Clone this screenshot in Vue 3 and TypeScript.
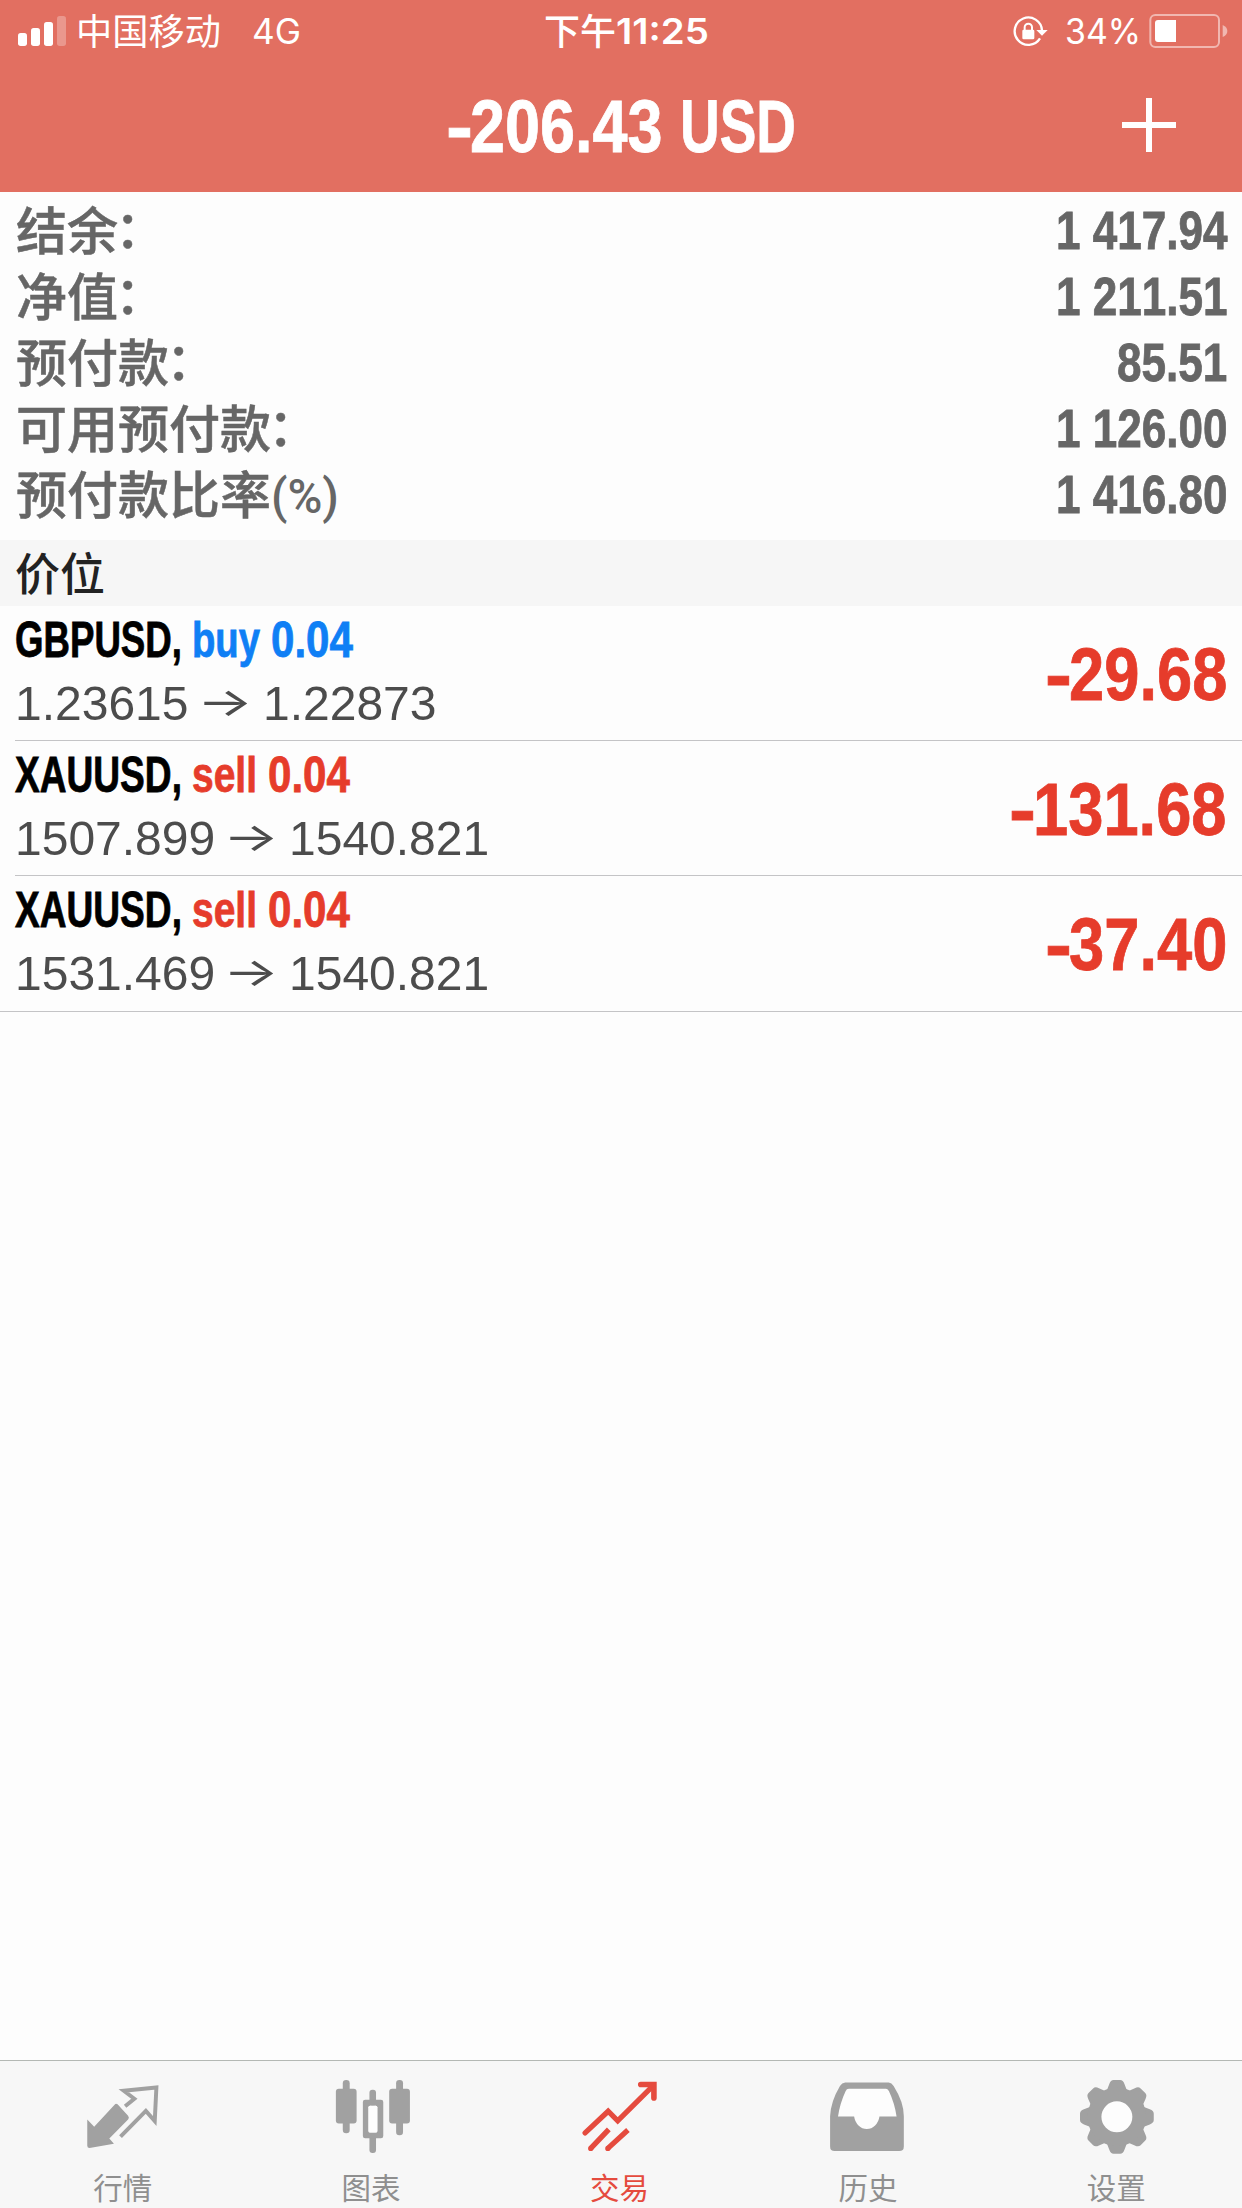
<script setup lang="ts">
import { h, type VNode } from 'vue'

interface RunProps {
  text: string
  /** width the text is set to */
  w: number
  /** line height */
  h: number
  /** baseline, from the top of the line */
  base: number
  /** room taken in the line, when it differs from the width */
  box?: number
}

// A run of text condensed or expanded to a set width.
const Run = (p: RunProps) =>
  h('svg', { width: p.box ?? p.w, height: p.h, style: 'display:block;flex:none;overflow:visible;fill:currentColor' }, [
    h(
      'text',
      {
        x: 0,
        y: p.base,
        onVnodeMounted: (node: VNode) => {
          const el = node.el as SVGTextElement
          el.setAttribute('transform', `scale(${p.w / el.getComputedTextLength()} 1)`)
        },
      },
      p.text,
    ),
  ])
Run.props = ['text', 'w', 'h', 'base', 'box']

// Figures share one width; spaces and points take half of it.
const figures = (s: string, pitch: number): number =>
  [...s].reduce((sum, c) => sum + (c === ' ' || c === '.' ? pitch / 2 : pitch), 0)

const summary = [
  { label: '结余', mark: '：', value: '1 417.94' },
  { label: '净值', mark: '：', value: '1 211.51' },
  { label: '预付款', mark: '：', value: '85.51' },
  { label: '可用预付款', mark: '：', value: '1 126.00' },
  { label: '预付款比率', unit: '(%)', value: '1 416.80' },
]

const positions = [
  { symbol: 'GBPUSD,', side: 'buy', sideWidth: 68, lots: '0.04', open: '1.23615', now: '1.22873', profit: '29.68' },
  { symbol: 'XAUUSD,', side: 'sell', sideWidth: 65, lots: '0.04', open: '1507.899', now: '1540.821', profit: '131.68' },
  { symbol: 'XAUUSD,', side: 'sell', sideWidth: 65, lots: '0.04', open: '1531.469', now: '1540.821', profit: '37.40' },
]
</script>

<template>
  <div class="app">
    <header class="header">
      <div class="status">
        <div class="status-left">
          <svg width="48" height="32" viewBox="54 42 144 96" fill="#fff">
            <rect x="54" y="96" width="27" height="39" rx="8" />
            <rect x="93" y="81" width="27" height="54" rx="8" />
            <rect x="132" y="63" width="27" height="72" rx="8" />
            <rect x="171" y="45" width="27" height="90" rx="8" opacity=".28" />
          </svg>
          <Run class="carrier" text="中国移动" :w="145" :h="62" :base="45" />
          <Run class="network" text="4G" :w="49" :h="62" :base="44" />
        </div>
        <div class="clock">
          <Run class="clock-cjk" text="下午" :w="72" :h="62" :base="45" />
          <Run class="clock-num" text="11:25" :w="93" :h="62" :base="44" />
        </div>
        <div class="status-right">
          <svg class="lock" width="36" height="32" viewBox="575 42 108 96" fill="none" stroke="#fff">
            <path d="M659 112A41 41 0 1 1 665 88" stroke-width="7" />
            <path d="M648 87H682L665 104Z" fill="#fff" stroke="none" />
            <rect x="606" y="86" width="36" height="29" rx="4" fill="#fff" stroke="none" />
            <path d="M613 89V79a11 11 0 0 1 22 0V89" stroke-width="6" />
          </svg>
          <Run class="percent" text="34%" :w="76" :h="62" :base="44" />
          <svg width="79" height="34" viewBox="987 39 237 102">
            <rect x="991" y="42" width="206" height="96" rx="15" fill="none" stroke="#fff" stroke-opacity=".5" stroke-width="6" />
            <path d="M1068 57V123H1014Q1005 123 1005 114V66Q1005 57 1014 57Z" fill="#fff" />
            <path d="M1208 72Q1222 78 1222 90T1208 108Z" fill="#fff" fill-opacity=".5" />
          </svg>
        </div>
      </div>
      <div class="titlebar">
        <div class="title">
          <Run text="-" :w="27" :box="24" :h="130" :base="90" />
          <Run text="206.43" :w="192.5" :h="130" :base="90" />
          <Run class="currency" text="USD" :w="116" :h="130" :base="90" />
        </div>
        <svg class="plus" width="54" height="54" viewBox="0 0 54 54" stroke="#fff" stroke-width="6">
          <path d="M27 0V54M0 27H54" />
        </svg>
      </div>
    </header>

    <section class="summary">
      <div v-for="row in summary" :key="row.label" class="summary-row">
        <span class="label">{{ row.label }}<span v-if="row.mark" class="mark">{{ row.mark }}</span></span>
        <Run v-if="row.unit" class="unit" :text="row.unit" :w="68" :h="66" :base="51" />
        <Run class="value" :text="row.value" :w="figures(row.value, 24.5)" :h="66" :base="51" />
      </div>
    </section>

    <h2 class="section-title">价位</h2>

    <section class="positions">
      <article v-for="(p, i) in positions" :key="i" class="position">
        <div class="details">
          <div class="deal">
            <Run class="symbol" :text="p.symbol" :w="167" :h="66" :base="51" />
            <Run class="side" :class="p.side" :text="p.side" :w="p.sideWidth" :h="66" :base="51" />
            <Run class="lots" :class="p.side" :text="p.lots" :w="82" :h="66" :base="51" />
          </div>
          <div class="prices">
            <Run :text="p.open" :w="figures(p.open, 26.7)" :h="68" :base="48" />
            <Run class="arrow" text="→" :w="56" :h="68" :base="44" />
            <Run :text="p.now" :w="figures(p.now, 26.7)" :h="68" :base="48" />
          </div>
        </div>
        <div class="profit">
          <Run text="-" :w="27" :box="24" :h="134" :base="94" />
          <Run :text="p.profit" :w="figures(p.profit, 35.2)" :h="134" :base="94" />
        </div>
      </article>
    </section>

    <nav class="tabs">
      <a class="tab">
        <svg width="80" height="80" viewBox="132.6 108 240 240">
          <path d="M141 240L162 262L224 195Q228 190 233 194L265 229Q270 235 265 240L208 298L222 314L148 327Q141 327 141 320Z" fill="currentColor" />
          <path d="M256 200L284 177L252 153L351 143L346 245L319 214L242 292" fill="none" stroke="currentColor" stroke-width="12" />
        </svg>
        <span>行情</span>
      </a>
      <a class="tab">
        <svg width="80" height="80" viewBox="877.8 108 240 240" fill="currentColor">
          <rect x="906" y="120" width="21" height="162" rx="10" />
          <rect x="885" y="147" width="63" height="105" rx="9" />
          <rect x="1068" y="120" width="21" height="168" rx="10" />
          <rect x="1047" y="147" width="63" height="105" rx="9" />
          <rect x="987" y="150" width="20" height="48" rx="9" />
          <rect x="987" y="284" width="20" height="58" rx="9" />
          <path fill-rule="evenodd" d="M974 180H1022Q1029 180 1029 187V290Q1029 297 1022 297H974Q967 297 967 290V187Q967 180 974 180ZM989 198Q984 198 984 203V275Q984 280 989 280H1006Q1011 280 1011 275V203Q1011 198 1006 198Z" />
          <rect x="984" y="198" width="27" height="82" rx="5" fill="#fdfdfd" />
        </svg>
        <span>图表</span>
      </a>
      <a class="tab active">
        <svg width="80" height="80" viewBox="123 108 240 240" fill="none" stroke="currentColor" stroke-width="16">
          <path d="M134 281L204 215L233 244L340 138" stroke-linecap="round" />
          <path d="M303 134H343V175" stroke-width="17" stroke-linecap="round" />
          <path d="M151 328L206 270M203 328L264 272" />
          <path d="M151 328h.1M203 328h.1" stroke-linecap="round" />
        </svg>
        <span>交易</span>
      </a>
      <a class="tab">
        <svg width="80" height="80" viewBox="868.2 108 240 240" fill="currentColor">
          <path d="M927 147Q920 147 917 154Q900 190 894 231L943 232A39 45 0 0 0 1020 231H1072Q1066 190 1049 154Q1046 148 1040 147Z" fill="#fdfdfd" />
          <path fill-rule="evenodd" d="M916 128H1048Q1057 129 1063 138Q1094 187 1094 230V322Q1094 336 1080 336H884Q870 336 870 322V230Q872 185 900 138Q906 129 916 128ZM927 147Q920 147 917 154Q900 190 894 231H943A39 45 0 0 0 1020 231H1072Q1066 190 1049 154Q1046 148 1040 147Z" />
        </svg>
        <span>历史</span>
      </a>
      <a class="tab">
        <svg width="80" height="80" viewBox="233.4 108 240 240">
          <circle cx="350" cy="232" r="50" fill="#fdfdfd" />
          <g fill="currentColor">
            <path
              v-for="n in 8"
              :key="n"
              d="M310 165Q323 148 327 132Q331 120 340 120H360Q369 120 373 132Q377 148 390 165Z"
              :transform="`rotate(${n * 45} 350 232)`"
            />
          </g>
          <circle cx="350" cy="232" r="68" fill="none" stroke="currentColor" stroke-width="42" />
        </svg>
        <span>设置</span>
      </a>
    </nav>
  </div>
</template>

<style>
body {
  margin: 0;
  background: #fdfdfd;
}
</style>

<style scoped>
.app {
  display: flex;
  flex-direction: column;
  width: 1242px;
  height: 2208px;
  overflow: hidden;
  background: #fdfdfd;
  font-family: "Liberation Sans", "Noto Sans CJK SC", sans-serif;
  font-kerning: none;
}

.header {
  flex: none;
  height: 192px;
  background: #e26f61;
  color: #fff;
}

.status {
  display: grid;
  grid-template-columns: 1fr auto 1fr;
  height: 62px;
  padding: 0 14px 0 18px;
}

.status-left,
.status-right,
.clock {
  display: flex;
  align-items: center;
}

.status-right {
  justify-content: flex-end;
}

.carrier {
  margin-left: 10px;
  font: 400 36px "Noto Sans CJK SC", sans-serif;
}

.network {
  margin-left: 31px;
  font: 400 35px Inter, sans-serif;
}

.clock {
  padding-left: 6px;
}

.clock-cjk {
  font: 500 36px "Noto Sans CJK SC", sans-serif;
}

.clock-num {
  font: 600 35px Inter, sans-serif;
}

.percent {
  margin: 0 8px 0 17px;
  font: 400 35px Inter, sans-serif;
}

.titlebar {
  display: grid;
  grid-template-columns: 1fr auto 1fr;
  align-items: start;
  height: 130px;
}

.title {
  display: flex;
  grid-column: 2;
  font-size: 75px;
  font-weight: 700;
  stroke: currentColor;
  stroke-width: 0.8px;
}

.currency {
  margin-left: 17px;
}

.plus {
  justify-self: end;
  margin: 36px 66px 0 0;
}

.summary {
  flex: none;
  padding: 6px 15px 12px 16px;
  color: #666;
}

.summary-row {
  display: flex;
  height: 66px;
}

.label {
  font: 500 51px/61px "Noto Sans CJK SC", sans-serif;
  white-space: nowrap;
  -webkit-text-stroke: 0.5px currentColor;
}

.mark {
  margin-left: -3px;
  line-height: 1;
  vertical-align: 2px;
}

.unit {
  font: 500 48px Roboto, sans-serif;
}

.value {
  margin-left: auto;
  font-size: 53px;
  font-weight: 700;
  stroke: currentColor;
  stroke-width: 0.8px;
}

.section-title {
  flex: none;
  height: 66px;
  margin: 0;
  padding-left: 15px;
  background: #f6f6f6;
  color: #222;
  font: 500 45px/64px "Noto Sans CJK SC", sans-serif;
}

.position {
  display: flex;
  justify-content: space-between;
  height: 134px;
  margin-left: 15px;
  padding-right: 15px;
  border-bottom: 1px solid #c4c4c6;
}

.position:last-child {
  height: 135px;
  margin-left: 0;
  padding-left: 15px;
}

.deal,
.prices,
.profit {
  display: flex;
}

.deal {
  font-size: 50px;
  font-weight: 700;
  color: #000;
  stroke: currentColor;
  stroke-width: 0.8px;
}

.deal > * {
  stroke: currentColor;
}

.side {
  margin-left: 10px;
}

.lots {
  margin-left: 11px;
}

.buy {
  color: #0f7ff5;
}

.sell {
  color: #e63c2b;
}

.prices {
  font-size: 49px;
  color: #4c4c4c;
}

.arrow {
  margin: 0 10px 0 8px;
  font: 400 40px Inter, sans-serif;
}

.profit {
  font-size: 74px;
  font-weight: 700;
  color: #e63c2b;
  stroke: currentColor;
  stroke-width: 0.8px;
}

.tabs {
  display: flex;
  flex: none;
  height: 147px;
  margin-top: auto;
  border-top: 1px solid #b4b8b4;
  background: #f7f7f7;
}

.tab {
  display: flex;
  flex: 1;
  flex-direction: column;
  align-items: center;
  padding-top: 15px;
  color: #a1a1a1;
}

.tab span {
  margin-top: 9px;
  margin-right: 3px;
  color: #8f8f8f;
  font: 400 29.5px/44px "Noto Sans CJK SC", sans-serif;
}

.tab.active,
.tab.active span {
  color: #e54b3e;
}
</style>
